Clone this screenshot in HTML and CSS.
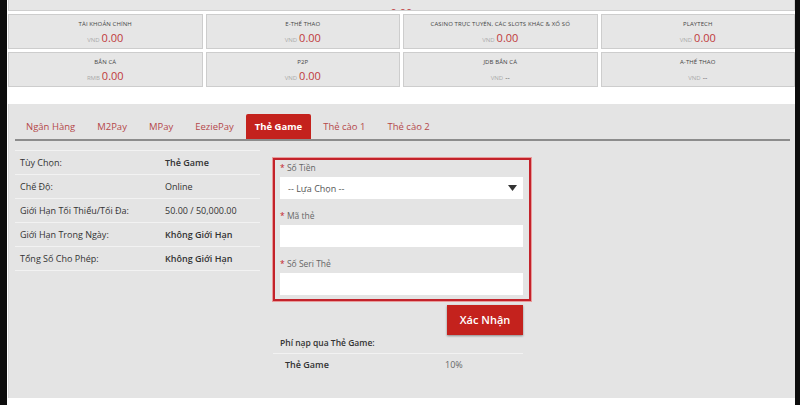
FILE: index.html
```html
<!DOCTYPE html>
<html lang="vi">
<head>
    <meta charset="UTF-8">
    <title>Nạp Tiền - Thẻ Game</title>
    <link rel="stylesheet" href="styles.css">
</head>
<body>
    <div class="page">
        <div class="total-card">
            <span class="total-amount">0.00</span>
        </div>

        <div class="wallets">
            <div class="wallet">
                <div class="wallet-name">TÀI KHOẢN CHÍNH</div>
                <div class="wallet-balance"><span class="cur">VND</span><span class="val">0.00</span></div>
            </div>
            <div class="wallet">
                <div class="wallet-name">E-THỂ THAO</div>
                <div class="wallet-balance"><span class="cur">VND</span><span class="val">0.00</span></div>
            </div>
            <div class="wallet">
                <div class="wallet-name">CASINO TRỰC TUYẾN, CÁC SLOTS KHÁC &amp; XỔ SỐ</div>
                <div class="wallet-balance"><span class="cur">VND</span><span class="val">0.00</span></div>
            </div>
            <div class="wallet">
                <div class="wallet-name">PLAYTECH</div>
                <div class="wallet-balance"><span class="cur">VND</span><span class="val">0.00</span></div>
            </div>
            <div class="wallet">
                <div class="wallet-name">BẮN CÁ</div>
                <div class="wallet-balance"><span class="cur">RMB</span><span class="val">0.00</span></div>
            </div>
            <div class="wallet">
                <div class="wallet-name">P2P</div>
                <div class="wallet-balance"><span class="cur">VND</span><span class="val">0.00</span></div>
            </div>
            <div class="wallet">
                <div class="wallet-name">JDB BẮN CÁ</div>
                <div class="wallet-balance"><span class="cur">VND</span><span class="dash">--</span></div>
            </div>
            <div class="wallet">
                <div class="wallet-name">A-THỂ THAO</div>
                <div class="wallet-balance"><span class="cur">VND</span><span class="dash">--</span></div>
            </div>
        </div>

        <div class="deposit">
            <ul class="tabs">
                <li>Ngân Hàng</li>
                <li>M2Pay</li>
                <li>MPay</li>
                <li>EeziePay</li>
                <li class="active">Thẻ Game</li>
                <li>Thẻ cào 1</li>
                <li>Thẻ cào 2</li>
            </ul>

            <div class="deposit-body">
                <table class="info">
                    <tr><td>Tùy Chọn:</td><td class="strong">Thẻ Game</td></tr>
                    <tr><td>Chế Độ:</td><td>Online</td></tr>
                    <tr><td>Giới Hạn Tối Thiểu/Tối Đa:</td><td>50.00 / 50,000.00</td></tr>
                    <tr><td>Giới Hạn Trong Ngày:</td><td class="strong">Không Giới Hạn</td></tr>
                    <tr><td>Tổng Số Cho Phép:</td><td class="strong">Không Giới Hạn</td></tr>
                </table>

                <div class="form-col">
                    <div class="card-form">
                        <label class="field-label"><span class="req">*</span> Số Tiền</label>
                        <div class="select">
                            <span>-- Lựa Chọn --</span>
                            <svg width="9" height="6" viewBox="0 0 9 6"><path d="M0 0h9L4.5 6z" fill="#333"/></svg>
                        </div>
                        <label class="field-label"><span class="req">*</span> Mã thẻ</label>
                        <div class="input"></div>
                        <label class="field-label"><span class="req">*</span> Số Seri Thẻ</label>
                        <div class="input"></div>
                    </div>

                    <div class="actions">
                        <a href="#" class="button">Xác Nhận</a>
                    </div>

                    <div class="fee-title">Phí nạp qua Thẻ Game:</div>
                    <div class="fee-row">
                        <span class="fee-name">Thẻ Game</span>
                        <span class="fee-value">10%</span>
                    </div>
                </div>
            </div>
        </div>
    </div>
</body>
</html>
```

FILE: styles.css
```css
body {
    margin: 0;
    background: #0d0d0d;
    font-family: 'Open Sans', 'Noto Sans', sans-serif;
    color: #333;
    height: 405px;
    overflow: hidden;
}
.page {
    margin: 0 5px 0 7px;
    background: #fff;
    height: 405px;
    padding: 0 0 0 1px;
}
.total-card {
    background: #e6e6e6;
    border: 1px solid #cfcfcf;
    border-top: none;
    height: 10px;
    overflow: hidden;
    text-align: center;
}
.total-amount {
    display: inline-block;
    margin-top: -6px;
    color: #c0393b;
    font-size: 11px;
    line-height: 12px;
}
.wallets {
    display: grid;
    grid-template-columns: repeat(4, 1fr);
    gap: 3px;
    padding-top: 3px;
}
.wallet {
    background: #e6e6e6;
    border: 1px solid #cdcdcd;
    height: 35px;
    text-align: center;
    box-sizing: border-box;
    padding-top: 5px;
}
.wallet-name {
    font-size: 6px;
    line-height: 9px;
    color: #444;
    letter-spacing: 0.1px;
}
.wallet-balance {
    line-height: 14px;
}
.cur {
    font-size: 6px;
    color: #aaa;
    margin-right: 2px;
}
.val {
    font-size: 11px;
    color: #c0393b;
}
.dash {
    font-size: 7px;
    color: #666;
}
.deposit {
    margin-top: 17px;
    background: #e4e4e4;
    border-left: 1px solid #d6d6d6;
    height: 294px;
    padding: 10px 5px 0 6px;
    box-sizing: border-box;
}
.tabs {
    list-style: none;
    margin: 0;
    padding: 0;
    display: flex;
    border-bottom: 2px solid #8c8c8c;
    height: 25px;
}
.tabs li {
    font-size: 9.5px;
    line-height: 25px;
    color: #b5484a;
    padding: 0 11px;
}
.tabs li.active {
    background: #c4221d;
    color: #fff;
    font-weight: 700;
    border-radius: 2px 2px 0 0;
    padding: 0 9px;
    margin: 0 1px;
}
.deposit-body {
    display: flex;
    gap: 13px;
    padding-top: 9px;
}
.info {
    width: 245px;
    border-collapse: collapse;
    align-self: flex-start;
    border-top: 1px solid #f2f2f2;
}
.info td {
    font-size: 9px;
    height: 23px;
    padding: 0 0 0 5px;
    border-bottom: 1px solid #f2f2f2;
    color: #333;
}
.info td:first-child {
    width: 140px;
}
.info td.strong {
    font-weight: 600;
}
.form-col {
    width: 258px;
    padding-top: 8px;
}
.card-form {
    border: 2px solid #c3222a;
    padding: 1px 6px 4px 5px;
    box-shadow: 0 0 0 1px #e89a9a;
}
.field-label {
    display: block;
    font-size: 8.5px;
    line-height: 14px;
    color: #666;
    height: 16px;
}
.req {
    color: #c3222a;
}
.select,
.input {
    background: #fff;
    height: 22px;
    margin-bottom: 10px;
}
.input:last-child {
    margin-bottom: 0;
}
.select {
    display: flex;
    justify-content: space-between;
    align-items: center;
    padding: 0 6px 0 8px;
    font-size: 9px;
    color: #555;
}
.actions {
    display: flex;
    justify-content: flex-end;
    padding: 4px 8px 0 0;
}
.button {
    display: inline-block;
    background: #c4221d;
    color: #fff;
    text-decoration: none;
    font-size: 11px;
    font-weight: 600;
    width: 76px;
    line-height: 30px;
    text-align: center;
    box-shadow: 0 1px 2px rgba(0,0,0,0.4);
}
.fee-title {
    font-size: 8.5px;
    font-weight: 600;
    padding: 2px 0 5px 7px;
    border-bottom: 1px solid #f2f2f2;
    margin-right: 8px;
}
.fee-row {
    display: flex;
    font-size: 9px;
    padding: 4px 0 0 12px;
}
.fee-name {
    width: 160px;
    font-weight: 600;
}
.fee-value {
    color: #666;
}
```
